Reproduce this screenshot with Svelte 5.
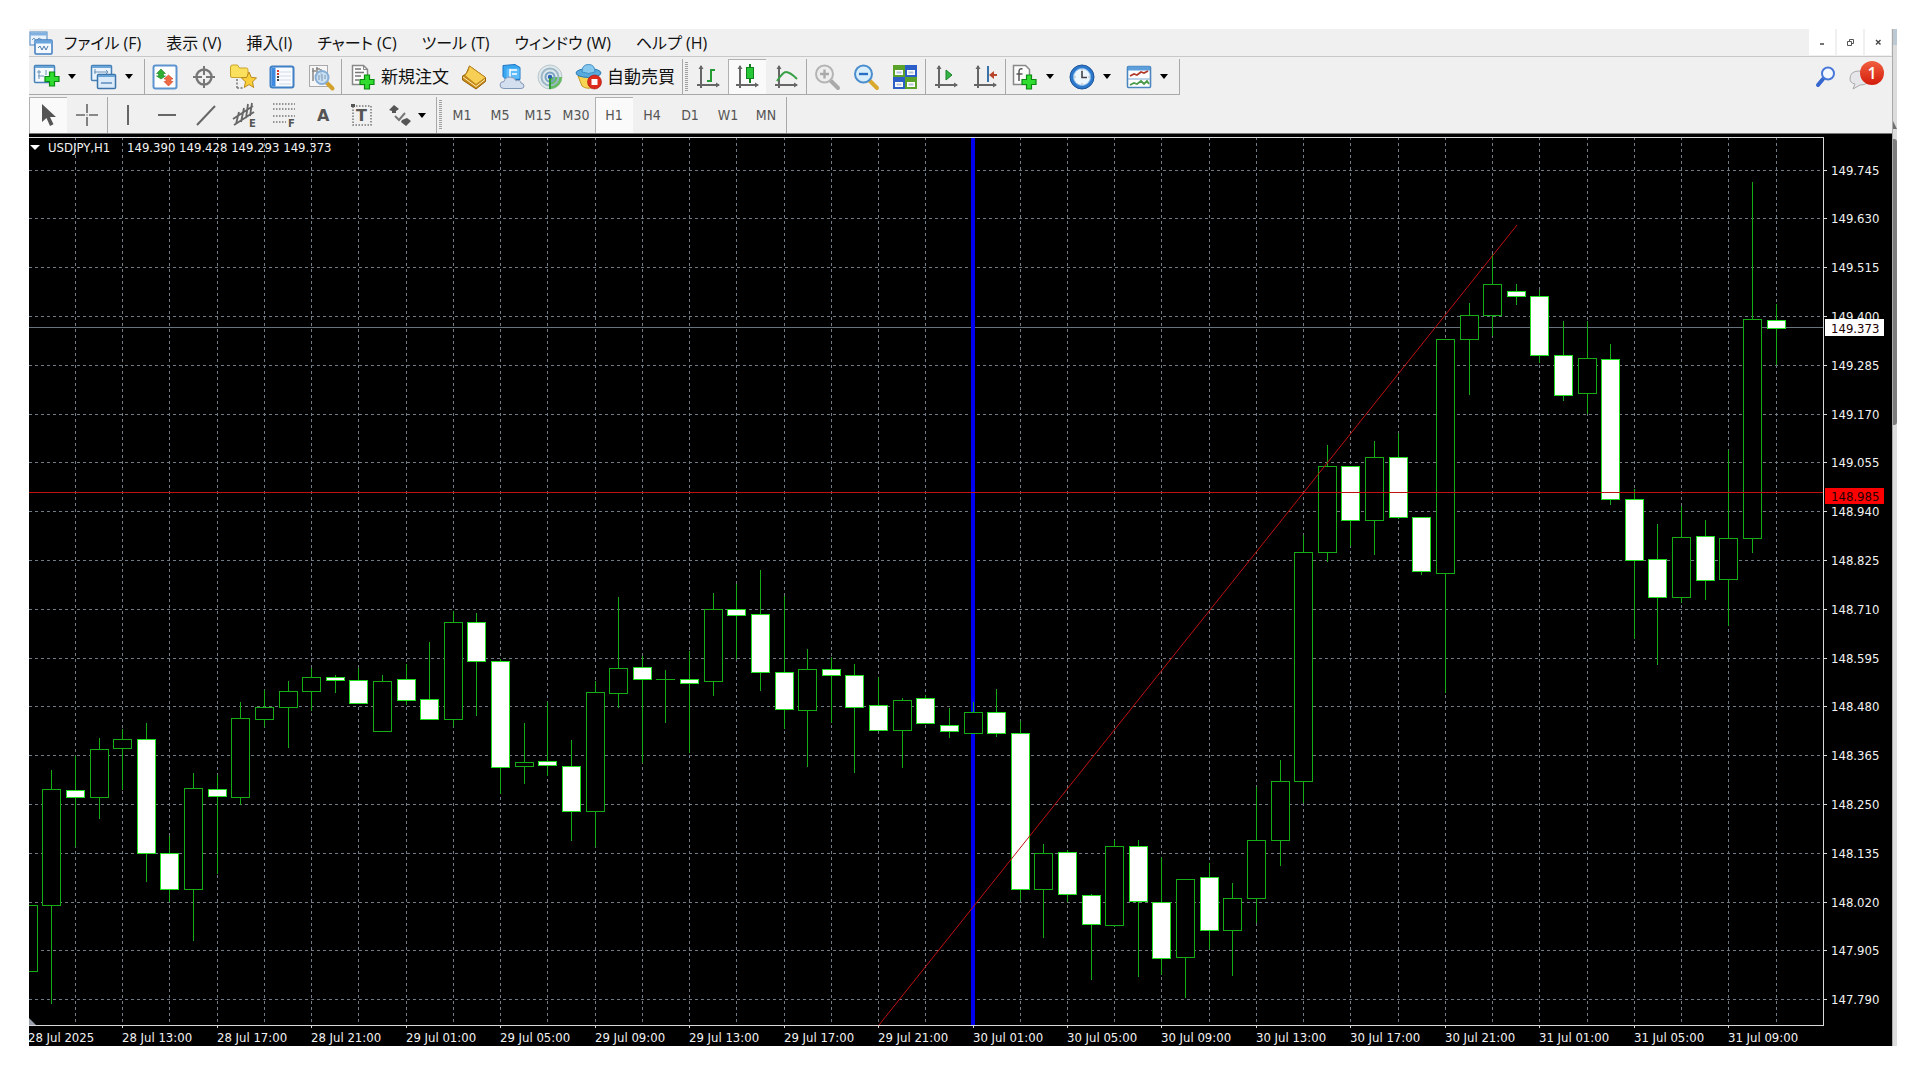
<script>
  const menus = [
    'ファイル (F)',
    '表示 (V)',
    '挿入(I)',
    'チャート (C)',
    'ツール (T)',
    'ウィンドウ (W)',
    'ヘルプ (H)'
  ];

  const timeframes = ['M1', 'M5', 'M15', 'M30', 'H1', 'H4', 'D1', 'W1', 'MN'];
  let timeframe = $state('H1');
  let tool = $state('cursor');
  let chartType = $state('candles');

  const tools = [
    ['vline', '垂直線'],
    ['hline', '水平線'],
    ['trend', 'トレンドライン'],
    ['channel', 'チャネル'],
    ['fibo', 'フィボナッチ'],
    ['text', 'テキスト'],
    ['label', 'ラベル']
  ];

  // chart geometry
  const left = 29;
  const top = 137;
  const right = 1824;
  const bottom = 1025;
  const step = 23.62;
  const x = (i) => Math.round(27.7 + i * step);

  // 0.115 between two price lines
  const prices = Array.from({ length: 18 }, (_, i) => ({
    label: (149.745 - i * 0.115).toFixed(3),
    y: Math.round(169.6 + i * 48.8)
  }));

  const columns = Array.from({ length: 37 }, (_, i) => x(2 + i * 2));

  const times = [
    '28 Jul 2025', '28 Jul 13:00', '28 Jul 17:00', '28 Jul 21:00',
    '29 Jul 01:00', '29 Jul 05:00', '29 Jul 09:00', '29 Jul 13:00', '29 Jul 17:00', '29 Jul 21:00',
    '30 Jul 01:00', '30 Jul 05:00', '30 Jul 09:00', '30 Jul 13:00', '30 Jul 17:00', '30 Jul 21:00',
    '31 Jul 01:00', '31 Jul 05:00', '31 Jul 09:00'
  ];

  // high, body top, body bottom, low, 1 = rising
  const candles = [
    [905, 905, 971, 971, 1], [770, 789, 905, 1003, 1], [756, 790, 797, 846, 0], [738, 749, 797, 818, 1],
    [729, 739, 748, 789, 1], [723, 739, 853, 881, 0], [836, 853, 889, 901, 0], [773, 788, 889, 940, 1],
    [775, 789, 796, 873, 0], [702, 718, 797, 804, 1], [690, 707, 719, 726, 1], [681, 691, 707, 747, 1],
    [668, 677, 691, 710, 1], [675, 677, 680, 692, 0], [668, 680, 703, 703, 0], [675, 681, 731, 731, 1],
    [664, 679, 700, 704, 0], [642, 699, 719, 719, 0], [611, 622, 719, 726, 1], [613, 622, 661, 715, 0],
    [659, 661, 767, 793, 0], [723, 762, 766, 783, 1], [702, 761, 765, 775, 0], [740, 766, 811, 840, 0],
    [681, 692, 811, 846, 1], [597, 668, 693, 707, 1], [656, 667, 679, 762, 0], [670, 679, 679, 722, 1],
    [651, 679, 683, 752, 0], [593, 609, 681, 695, 1], [584, 609, 615, 658, 0], [570, 614, 672, 690, 0],
    [596, 672, 709, 728, 0], [649, 669, 710, 766, 1], [657, 669, 675, 722, 0], [664, 675, 707, 772, 0],
    [677, 705, 730, 730, 0], [698, 700, 730, 767, 1], [695, 698, 723, 723, 0], [708, 725, 731, 737, 0],
    [702, 712, 733, 733, 1], [689, 712, 733, 736, 0], [721, 733, 889, 899, 0], [844, 853, 889, 937, 1],
    [850, 852, 894, 901, 0], [894, 895, 924, 979, 0], [840, 846, 925, 926, 1], [840, 846, 901, 976, 0],
    [857, 902, 958, 974, 0], [879, 879, 957, 997, 1], [863, 877, 930, 948, 0], [883, 898, 930, 975, 1],
    [787, 840, 898, 922, 1], [760, 781, 840, 865, 1], [535, 552, 781, 802, 1], [445, 466, 552, 561, 1],
    [466, 466, 520, 545, 0], [441, 457, 520, 554, 1], [433, 457, 517, 518, 0], [517, 517, 571, 574, 0],
    [339, 339, 573, 692, 1], [303, 315, 339, 394, 1], [254, 284, 315, 335, 1], [284, 291, 296, 304, 0],
    [290, 296, 355, 362, 0], [321, 355, 395, 400, 0], [321, 358, 393, 413, 1], [344, 359, 499, 504, 0],
    [489, 499, 560, 638, 0], [524, 559, 597, 664, 0], [506, 537, 597, 602, 1], [520, 536, 580, 599, 0],
    [450, 538, 579, 625, 1], [182, 319, 538, 552, 1], [304, 320, 328, 364, 0]
  ];
</script>

{#snippet plus(cx, cy)}
  <path
    transform="translate({cx} {cy})"
    d="M-2.500-7h5v4.500H7v5H2.500V7h-5V2.500H-7v-5h4.500z"
    fill="#2fdc2f"
    stroke="#0b8a12"
    stroke-width="1.200"
  />
{/snippet}

{#snippet axes()}
  <path d="M7 3v22M3 22h22" fill="none" stroke="#666" stroke-width="2" />
  <path d="M4.500 6L7 2l2.500 4zM22 19.500l4 2.500-4 2.500z" fill="#666" />
{/snippet}

{#snippet icon(name)}
  <svg class="icon" viewBox="0 0 28 28" aria-hidden="true">
    {#if name === 'newchart'}
      <rect x="1.500" y="2.500" width="20" height="17" rx="1" fill="#f4f9fe" stroke="#4681b8" stroke-width="1.500" />
      <path d="M2 4h19" stroke="#6aa5d8" stroke-width="2" />
      <path d="M6 7v9M4 9h4M5 13h6M13 7v5" stroke="#6c92b5" fill="none" />
      {@render plus(19, 16)}
    {:else if name === 'profiles'}
      <rect x="1.500" y="2.500" width="20" height="15" rx="1" fill="#eaf3fc" stroke="#4681b8" stroke-width="1.500" />
      <path d="M2 4h19" stroke="#6aa5d8" stroke-width="2" />
      <path d="M5 6v5M4 9h14M16 7l2 2-2 2" stroke="#6c92b5" fill="none" />
      <rect x="7.500" y="11.500" width="18" height="14" rx="1" fill="#dcebfa" stroke="#3d74ab" stroke-width="1.500" />
      <path d="M8 13h17" stroke="#6aa5d8" stroke-width="2" />
      <path d="M11 20h11" stroke="#7ba3cb" stroke-width="2" />
    {:else if name === 'market'}
      <rect x="2.500" y="2.500" width="23" height="23" rx="2" fill="#fff" stroke="#5c94cf" stroke-width="2" />
      <path d="M5.500 10.500l4.500-4.500 4.500 4.500h-2v2.500h2l-4.500 3-4.500-3h2v-2.500z" fill="#2fae34" stroke="#1b8222" stroke-width=".6" />
      <path d="M13 16l4.500-4 4.500 4h-2v2.500h2l-4.500 4.500-4.500-4.500h2V16z" fill="#ef6a45" stroke="#cf3f22" stroke-width=".6" />
    {:else if name === 'datawindow'}
      <circle cx="14" cy="14" r="7.500" fill="none" stroke="#777" stroke-width="2.400" />
      <path d="M14 3v9M14 16v9M3 14h9M16 14h9" stroke="#777" stroke-width="2" />
    {:else if name === 'navigator'}
      <path d="M1.500 4q0-2 2-2h5l2 3h7q1.500 0 1.500 2v6q0 1.500-1.500 1.500h-14.500q-1.500 0-1.500-1.500z" fill="#fbe05d" stroke="#c9a22a" />
      <path d="M8 16v10M8 25h6" stroke="#777" stroke-width="1.500" stroke-dasharray="2 1.500" fill="none" />
      <path d="M20 9l2.300 5.400 5.200.5-4 4 1.200 5.600-4.700-3-4.700 3 1.200-5.600-4-4 5.200-.5z" fill="#f9cf3c" stroke="#b98a1c" />
    {:else if name === 'terminal'}
      <rect x="2.500" y="3.500" width="23" height="21" rx="2" fill="#f8fbff" stroke="#3f7fc4" stroke-width="2" />
      <path d="M3.500 4.500h4v19h-4z" fill="#3d8ae0" />
      <path d="M11 9h12M11 13h12M11 17h12M11 21h12" stroke="#d5dbe4" />
      <path d="M9 8h2M9 11h2" stroke="#d83a2c" stroke-width="2" />
      <path d="M9 14h2M9 17h2" stroke="#444" stroke-width="2" />
    {:else if name === 'tester'}
      <rect x="2.500" y="2.500" width="18" height="21" fill="#f6f6f6" stroke="#aaa" />
      <path d="M6 5v13M10 4v9M14 6v9M5 8h4M9 6h4" stroke="#888" stroke-width="1.500" />
      <path d="M19.500 19.500l6 6" stroke="#d3a22c" stroke-width="4" stroke-linecap="round" />
      <circle cx="15" cy="14.500" r="6.500" fill="#c3def5" fill-opacity=".85" stroke="#87aed6" stroke-width="2" />
      <path d="M12 12v5M15 11v7M18 12v4" stroke="#7894ae" />
    {:else if name === 'neworder'}
      <path d="M3.500 2.500h11l4 4v15h-15z" fill="#fcfcfc" stroke="#888" stroke-width="1.500" />
      <path d="M14.500 2.500v4h4" fill="none" stroke="#888" />
      <path d="M6 6h6M6 9.500h9M6 13h6M6 17h4" stroke="#777" stroke-width="1.500" />
      {@render plus(18, 19)}
    {:else if name === 'metaeditor'}
      <path d="M9.500 3L25.500 14.500v4L16 26 2.500 17v-4L6 11z" fill="#c98a1a" stroke="#96620a" />
      <path d="M9.500 3L25.500 14.500 16 21.500 5 12.500q3.500-4 4.500-9.500z" fill="#f7cf55" stroke="#b98218" stroke-width=".8" />
      <path d="M3 14l13 9.500 9-7" fill="none" stroke="#fff1b5" />
    {:else if name === 'vps'}
      <path d="M5 2.500l12-1 5 3v12H8l-3-3z" fill="#3ba7ef" stroke="#1e77c5" />
      <path d="M8.500 5.500h13v10h-13z" fill="#5fbcfb" />
      <path d="M12 6v8M12 7h7M14 11h5" stroke="#fff" stroke-width="1.500" fill="none" />
      <path d="M6 25.500q-4 0-4-3.500t4-3.500q1-4.500 6-4.500t6 4q1-1 3-.5 2 .5 2 2.500 3 .5 3 3t-3 2.500z" fill="#d3deee" stroke="#8298b8" />
    {:else if name === 'signals'}
      <circle cx="14" cy="14" r="12" fill="#dfe8ea" stroke="#b8c6cc" />
      <path d="M14 14h12a12 12 0 0 1-9 11.600L14 26z" fill="#63bd5c" />
      <circle cx="14" cy="14" r="8.500" fill="none" stroke="#9cb8c8" stroke-width="2" />
      <circle cx="14" cy="14" r="4.500" fill="none" stroke="#7aa3c4" stroke-width="2" />
      <circle cx="14" cy="14" r="2.200" fill="#2b62b8" />
      <path d="M14 15v11" stroke="#2e9a35" stroke-width="2" />
    {:else if name === 'autotrading'}
      <path d="M3 13l4 10q5 4 12 1l5-10z" fill="#f7d552" stroke="#c69a22" />
      <ellipse cx="13.500" cy="10" rx="12.500" ry="4.500" fill="#58a9dc" stroke="#2e7cb5" />
      <path d="M7 9q0-7.500 6.500-7.500T20 9q-6 3-13 0z" fill="#86c8ed" stroke="#3d8dc4" />
      <circle cx="19.500" cy="19" r="7" fill="#dc2a1c" stroke="#a8180e" stroke-width=".6" />
      <rect x="16.500" y="16" width="6" height="6" fill="#fff" />
    {:else if name === 'bars'}
      {@render axes()}
      <path d="M17 6v13M17 7h4M13 18h4" stroke="#259a35" stroke-width="2" fill="none" />
    {:else if name === 'candles'}
      {@render axes()}
      <path d="M17 1v19" stroke="#147c20" stroke-width="2" />
      <rect x="13.500" y="4.500" width="7" height="11" fill="#25c736" stroke="#11831c" />
    {:else if name === 'line'}
      {@render axes()}
      <path d="M5 18Q11 9 14 9q4 0 11 7" stroke="#37a044" stroke-width="2" fill="none" />
    {:else if name === 'zoomin' || name === 'zoomout'}
      {@const on = name === 'zoomout'}
      <path d="M18 18l7 7" stroke={on ? '#d9a92d' : '#aaa'} stroke-width="4" stroke-linecap="round" />
      <circle cx="11.500" cy="11" r="8.500" fill={on ? '#d8eefc' : '#eee'} stroke={on ? '#4b8ece' : '#b4b4b4'} stroke-width="2" />
      <path d={on ? 'M7 11h9' : 'M7 11h9M11.500 6.500v9'} stroke={on ? '#2a6fc2' : '#aaa'} stroke-width="2.400" fill="none" />
    {:else if name === 'tile'}
      <path d="M2 2h12v12H2zM14 14h12v12H14z" fill="#5ba22b" />
      <path d="M14 2h12v12H14zM2 14h12v12H2z" fill="#2b5fc7" />
      <path d="M4 7h8v5H4zM16 7h8v5h-8zM4 19h8v5H4zM16 19h8v5h-8z" fill="#fff" />
      <path d="M5.500 9.500h5M17.500 9.500h5M5.500 21.500h5M17.500 21.500h5" stroke="#b5c4da" stroke-width="2" />
    {:else if name === 'autoscroll'}
      {@render axes()}
      <path d="M14 7l6 5-6 5z" fill="#35b545" stroke="#188228" />
    {:else if name === 'shift'}
      {@render axes()}
      <path d="M17 3v16" stroke="#3972a8" stroke-width="2" />
      <path d="M26 12h-5" stroke="#b9452b" stroke-width="2" />
      <path d="M23 8l-5 4 5 4z" fill="#b9452b" />
    {:else if name === 'indicators'}
      <path d="M2.500 2.500h12l4 4v15h-16z" fill="#fcfcfc" stroke="#888" stroke-width="1.500" />
      <path d="M11.500 6Q8 5 8 9v9M5.500 11h6" stroke="#555" stroke-width="1.500" fill="none" />
      {@render plus(18, 19)}
    {:else if name === 'clock'}
      <circle cx="14" cy="14" r="12" fill="#2d78ca" stroke="#1c549b" />
      <circle cx="14" cy="14" r="8.500" fill="#eef6fd" stroke="#88bdec" />
      <path d="M14 8v6.500h5" stroke="#444" stroke-width="1.600" fill="none" />
      <path d="M14 6.500v1M14 20.500v1M6.500 14h1M20.500 14h1" stroke="#777" />
    {:else if name === 'template'}
      <rect x="2.500" y="3.500" width="23" height="21" rx="1" fill="#fff" stroke="#4a86bf" stroke-width="1.600" />
      <path d="M3 5.500h22" stroke="#5d9fda" stroke-width="4" />
      <path d="M3 16h22" stroke="#7ba9d4" />
      <path d="M5 13l4-2 3 1 4-3 3 1 4-2" stroke="#b13a2b" stroke-width="1.800" fill="none" />
      <path d="M5 22l4-2 3 1 4-3 3 3 3-3 2 3" stroke="#4b9b4b" stroke-width="1.800" fill="none" />
    {:else if name === 'cursor'}
      <path d="M8 3v18l4.500-4 3.500 8 3.500-1.700-3.500-7.300h6z" fill="#555" />
    {:else if name === 'crosshair'}
      <path d="M14 3v9M14 16v9M3 14h9M16 14h9" stroke="#666" stroke-width="1.600" />
      <path d="M13.500 14h1" stroke="#666" stroke-width="1.500" />
    {:else if name === 'vline'}
      <path d="M14 4v20" stroke="#666" stroke-width="2" />
    {:else if name === 'hline'}
      <path d="M5 14h18" stroke="#666" stroke-width="2" />
    {:else if name === 'trend'}
      <path d="M5 24L23 5" stroke="#666" stroke-width="2" />
    {:else if name === 'channel'}
      <path d="M2 18L22 5M3 24L23 11M5 23l3-12M10 21l3-14M15 17l2-14M19 15l2-13" stroke="#666" stroke-width="1.800" />
      <text x="18" y="26" font-size="10" font-weight="700">E</text>
    {:else if name === 'fibo'}
      <path d="M3 3h22M3 8h22M3 15h22M3 21h13" stroke="#777" stroke-width="1.500" stroke-dasharray="1.500 1.500" />
      <text x="18" y="26" font-size="10" font-weight="700">F</text>
    {:else if name === 'text'}
      <text x="8" y="20" font-size="16" font-weight="700">A</text>
    {:else if name === 'label'}
      <rect x="5" y="5" width="18" height="19" fill="none" stroke="#777" stroke-width="1.500" stroke-dasharray="1.500 1.500" />
      <path d="M3 3h4v3H3z" fill="#555" />
      <text x="8" y="20" font-size="16" font-weight="700">T</text>
    {:else if name === 'arrows'}
      <path d="M3 9l5-5 5 4-3 2v2H6v-2zM16 19l5-2 4 3-5 5-5-4z" fill="#555" />
      <path d="M9 15l4 4 6-7" stroke="#777" stroke-width="2" fill="none" />
    {:else if name === 'search'}
      <path d="M7 22l5-6" stroke="#3567cf" stroke-width="4" stroke-linecap="round" />
      <circle cx="17" cy="10.500" r="6" fill="#f4f8ff" stroke="#4a78d8" stroke-width="2" />
    {/if}
  </svg>
{/snippet}

{#snippet button(name, label)}
  <button class="tool" aria-label={label} title={label}>{@render icon(name)}</button>
{/snippet}

{#snippet dropdown(name, label)}
  <button class="tool drop" aria-label={label} title={label}>
    {@render icon(name)}<span class="caret"></span>
  </button>
{/snippet}

<div class="page">
  <div class="terminal">
    <header class="menubar">
      <svg class="logo" viewBox="0 0 24 24" aria-hidden="true">
        <rect x="1" y="1" width="17" height="13" fill="#e9f2fb" stroke="#4d86c0" />
        <path d="M1 3h17" stroke="#7fb0df" stroke-width="3" />
        <path d="M3 9l2-2 2 3 3-3 3 2" stroke="#6a94c2" fill="none" />
        <rect x="6" y="9" width="17" height="14" rx="1" fill="#f4f9ff" stroke="#3f7cc0" stroke-width="1.500" />
        <path d="M6 11h17" stroke="#6ba5de" stroke-width="3" />
        <path d="M9 17l2-2 2 4 2-4 2 4 2-4" stroke="#4a79ad" fill="none" />
      </svg>
      <nav class="menus">
        {#each menus as menu}
          <button class="menu">{menu}</button>
        {/each}
      </nav>
      <div class="window-buttons">
        <button aria-label="最小化"><svg viewBox="0 0 12 12"><path d="M4 8h4" stroke="#444" stroke-width="1.500" /></svg></button>
        <button aria-label="元に戻す">
          <svg viewBox="0 0 12 12"><path d="M3.500 5.500h4v4h-4zM5.500 5V3.500h4v4H8" fill="none" stroke="#555" /></svg>
        </button>
        <button aria-label="閉じる"><svg viewBox="0 0 12 12"><path d="M4 4l4.500 4.500M8.500 4L4 8.500" stroke="#444" stroke-width="1.400" /></svg></button>
      </div>
    </header>

    <div class="bar">
      <div class="strip underlined">
        <div class="group">
          {@render dropdown('newchart', '新規チャート')}
          {@render dropdown('profiles', '組表示')}
        </div>
        <div class="group spaced">
          {@render button('market', '気配値表示')}
          {@render button('datawindow', 'データウィンドウ')}
          {@render button('navigator', 'ナビゲーター')}
          {@render button('terminal', 'ターミナル')}
          {@render button('tester', 'ストラテジーテスター')}
        </div>
        <div class="group">
          <button class="tool wide">{@render icon('neworder')}<span>新規注文</span></button>
          {@render button('metaeditor', 'メタエディター')}
          {@render button('vps', '仮想ホスティング')}
          {@render button('signals', 'シグナル')}
          <button class="tool wide">{@render icon('autotrading')}<span>自動売買</span></button>
        </div>
        <div class="grip"></div>
        <div class="group spaced">
          {#each [['bars', 'バーチャート'], ['candles', 'ローソク足'], ['line', 'ラインチャート']] as [name, label]}
            <button
              class="tool"
              class:pressed={chartType === name}
              aria-label={label}
              onclick={() => (chartType = name)}
            >
              {@render icon(name)}
            </button>
          {/each}
        </div>
        <div class="group spaced">
          {@render button('zoomin', '拡大')}
          {@render button('zoomout', '縮小')}
          {@render button('tile', '整列')}
        </div>
        <div class="group spaced">
          {@render button('autoscroll', '自動スクロール')}
          {@render button('shift', 'チャートシフト')}
        </div>
        <div class="group">
          {@render dropdown('indicators', 'インディケータ')}
          {@render dropdown('clock', '時間足設定')}
          {@render dropdown('template', '定型チャート')}
        </div>
      </div>
      <div class="status">
        <button class="tool" aria-label="検索">{@render icon('search')}</button>
        <button class="notice" aria-label="通知">
          <svg viewBox="0 0 36 34" aria-hidden="true">
            <path d="M2 20q0-8 9-8 10 0 10 7t-9 7l-7 4 2-5q-5-1-5-5z" fill="#e6e6ea" stroke="#aaa" />
          </svg>
          <span class="count">1</span>
        </button>
      </div>
    </div>

    <div class="bar">
      <div class="strip">
        <div class="group spaced">
          {#each [['cursor', 'カーソル'], ['crosshair', 'クロスヘア']] as [name, label]}
            <button class="tool" class:pressed={tool === name} aria-label={label} onclick={() => (tool = name)}>
              {@render icon(name)}
            </button>
          {/each}
        </div>
        <div class="group spaced drawing">
          {#each tools as [name, label]}
            <button class="tool" class:pressed={tool === name} aria-label={label} onclick={() => (tool = name)}>
              {@render icon(name)}
            </button>
          {/each}
          {@render dropdown('arrows', '矢印')}
        </div>
        <div class="grip"></div>
        <div class="group">
          {#each timeframes as tf}
            <button class="tool period" class:pressed={timeframe === tf} onclick={() => (timeframe = tf)}>{tf}</button>
          {/each}
        </div>
      </div>
    </div>

    <svg class="chart" viewBox="29 134 1863 912" role="img" aria-label="USDJPY,H1">
      <g class="crisp">
        <!-- grid -->
        {#each prices as p}
          <path class="grid" d="M{left} {p.y + 0.5}H{right}" />
          <path class="frame" d="M{right} {p.y + 0.5}h3" />
        {/each}
        {#each columns as cx}
          <path class="grid" d="M{cx + 0.5} {top}V{bottom}" />
        {/each}

        <path class="bid" d="M{left} 327.500H{right}" />
        <path class="session" d="M973 {top + 1}V{bottom}" />

        <!-- candles -->
        {#each candles as [high, open, close, low, up], i}
          <path class="wick" d="M{x(i) + 0.5} {high}V{low + 1}" />
          <rect class={up ? 'up' : 'down'} x={x(i) - 8.5} y={open + 0.5} width="18" height={close - open} />
          {#if open === close}
            <path class="wick" d="M{x(i) - 9} {open + 0.5}h19" />
          {/if}
        {/each}

        <path class="level" d="M{left} 492.500H{right}" />
        <path class="frame" d="M{left} {top + 0.5}H{right - 0.5}V{bottom + 0.5}H{left}" />
        {#each times as _, i}
          <path class="frame" d="M{x(i * 4) + 0.5} {bottom}v3" />
        {/each}
      </g>
      <path class="level" d="M879 1025L1517 225" />
      <path d="M29 1018l7 7h-7z" fill="#9aa0aa" />
      <path d="M30 145h10l-5 5z" fill="#fff" />

      <g class="labels">
        <text x="48" y="152">USDJPY,H1</text>
        <text x="127" y="152">149.390 149.428 149.293 149.373</text>
        {#each prices as p}
          <text x="1831" y={p.y + 5}>{p.label}</text>
        {/each}
        {#each times as time, i}
          <text x={x(i * 4)} y="1042">{time}</text>
        {/each}
        <rect x="1825" y="319" width="59" height="17" fill="#fff" />
        <text class="dark" x="1831" y="333">149.373</text>
        <rect x="1825" y="488" width="59" height="16" fill="#f00" />
        <text class="dark" x="1831" y="501">148.985</text>
      </g>
    </svg>
  </div>

  <!-- sliver of the window behind -->
  <div class="behind">
    <div class="title"></div>
    <div class="arrow"></div>
    <div class="thumb"></div>
  </div>
</div>

<style>
  :global(body) {
    margin: 0;
    background: #fff;
  }

  .page {
    display: flex;
    padding: 29px 23px 32px 29px;
    font-family: 'Open Sans', 'Noto Sans CJK JP', sans-serif;
    color: #111;
  }

  .terminal {
    flex: 1;
    min-width: 0;
    background: #f0f0f0;
  }

  button {
    padding: 0;
    border: 0;
    background: none;
    font: inherit;
    color: inherit;
  }

  .menubar {
    display: flex;
    align-items: center;
    height: 27px;
    border-bottom: 1px solid #c8c8c8;
  }

  .logo {
    width: 24px;
    height: 24px;
    margin-right: 11px;
  }

  .menus {
    display: flex;
    flex: 1;
    gap: 25px;
  }

  .menu {
    font-size: 16px;
    line-height: 24px;
    font-feature-settings: 'palt';
    white-space: nowrap;
  }

  .window-buttons {
    display: flex;
    gap: 2px;
    align-self: stretch;
    margin-right: 1px;
  }

  .window-buttons button {
    display: grid;
    place-items: center;
    width: 26px;
    height: 26px;
    background: #fff;
  }

  .window-buttons svg {
    width: 12px;
    height: 12px;
  }

  .bar {
    display: flex;
    justify-content: space-between;
    height: 38px;
  }

  .bar:nth-of-type(2) {
    border-bottom: 1px solid #777;
  }

  .strip {
    display: flex;
    padding-top: 2px;
  }

  .underlined {
    border-bottom: 1px solid #a8a8a8;
  }

  .group {
    display: flex;
    padding-right: 1px;
    border-right: 1px solid #a8a8a8;
  }

  .group + .group {
    padding-left: 1px;
  }

  .spaced {
    gap: 1px;
  }

  .grip {
    width: 3px;
    margin: 3px 1px 3px 2px;
    background: repeating-linear-gradient(#a0a0a0 0 1px, #f0f0f0 1px 2px);
  }

  .tool {
    display: flex;
    flex: none;
    align-items: center;
    justify-content: center;
    box-sizing: border-box;
    width: 38px;
  }

  .drop {
    justify-content: flex-start;
    width: 57px;
    gap: 7px;
    padding-left: 4px;
  }

  .drawing .drop {
    width: 53px;
    gap: 4px;
  }

  .wide {
    width: auto;
    gap: 4px;
    padding: 0 6px;
    font-size: 17px;
    line-height: 24px;
    white-space: nowrap;
  }

  .pressed {
    background: #fafafa;
    box-shadow: inset 1px 1px #b0b0b0;
  }

  .caret {
    border: 4px solid transparent;
    border-top: 5px solid #000;
    border-bottom: 0;
  }

  .icon {
    flex: none;
    width: 28px;
    height: 28px;
    overflow: visible;
    fill: #555;
    font-family: 'DejaVu Sans', sans-serif;
  }

  .period {
    font-family: 'DejaVu Sans Condensed', 'Noto Sans', sans-serif;
    font-size: 14px;
    color: #555;
  }

  .status {
    display: flex;
    gap: 4px;
    margin-right: 8px;
    padding-top: 2px;
  }

  .notice {
    position: relative;
    width: 36px;
  }

  .notice svg {
    width: 36px;
    height: 34px;
  }

  .count {
    position: absolute;
    top: 2px;
    right: 0;
    width: 24px;
    height: 24px;
    border-radius: 50%;
    background: linear-gradient(#f0603f, #d41c0c);
    color: #fff;
    font-size: 16px;
    font-weight: 600;
    line-height: 24px;
    text-align: center;
  }

  .chart {
    display: block;
    width: 100%;
    background: #000;
  }

  .chart path,
  .chart rect {
    stroke-width: 1px;
  }

  .crisp {
    shape-rendering: crispEdges;
  }

  .grid {
    stroke: #727c86;
    stroke-dasharray: 3 3;
  }

  .frame {
    fill: none;
    stroke: #d8d8d8;
  }

  .bid {
    stroke: #66727c;
  }

  .chart .session {
    stroke: #0000f0;
    stroke-width: 4px;
  }

  .level {
    stroke: #c01010;
  }

  .wick {
    stroke: #16ac16;
  }

  .up {
    fill: #000;
    stroke: #16ac16;
  }

  .down {
    fill: #fff;
    stroke: #20e020;
  }

  .labels {
    fill: #f2f2f2;
    font-family: 'DejaVu Sans Condensed', 'Noto Sans', sans-serif;
    font-size: 13px;
  }

  .dark {
    fill: #200;
  }

  .behind {
    display: flex;
    flex-direction: column;
    width: 4px;
    border-left: 1px solid #aaa;
    background: #dcdcdc;
  }

  .title {
    height: 16px;
    margin-bottom: 76px;
    background: #bcc8d2;
  }

  .arrow {
    height: 8px;
    margin-bottom: 10px;
    background: #707070;
    clip-path: polygon(0 0, 100% 100%, 0 100%);
  }

  .thumb {
    height: 286px;
    border-radius: 0 3px 3px 0;
    background: #7d7d7d;
  }
</style>
